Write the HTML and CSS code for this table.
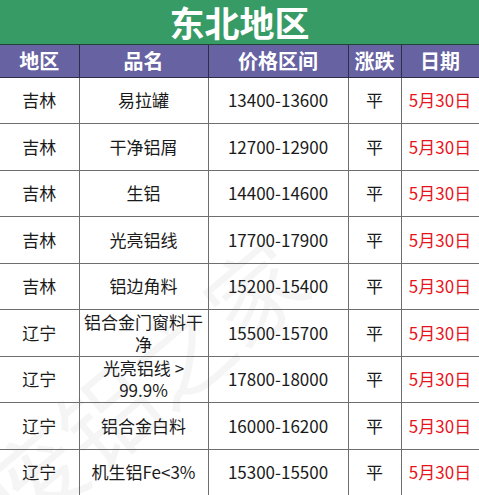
FILE: index.html
```html
<!DOCTYPE html>
<html lang="zh">
<head>
<meta charset="utf-8">
<link rel="stylesheet" href="styles.css">
</head>
<body>
<div class="sheet">
  <div class="title">东北地区</div>
  <table class="grid">
    <colgroup>
      <col class="c1"><col class="c2"><col class="c3"><col class="c4"><col class="c5">
    </colgroup>
    <thead>
      <tr><th>地区</th><th>品名</th><th>价格区间</th><th>涨跌</th><th>日期</th></tr>
    </thead>
    <tbody>
      <tr><td>吉林</td><td>易拉罐</td><td>13400-13600</td><td>平</td><td class="date">5月30日</td></tr>
      <tr><td>吉林</td><td>干净铝屑</td><td>12700-12900</td><td>平</td><td class="date">5月30日</td></tr>
      <tr><td>吉林</td><td>生铝</td><td>14400-14600</td><td>平</td><td class="date">5月30日</td></tr>
      <tr><td>吉林</td><td>光亮铝线</td><td>17700-17900</td><td>平</td><td class="date">5月30日</td></tr>
      <tr><td>吉林</td><td>铝边角料</td><td>15200-15400</td><td>平</td><td class="date">5月30日</td></tr>
      <tr><td>辽宁</td><td class="wrap">铝合金门窗料干净</td><td>15500-15700</td><td>平</td><td class="date">5月30日</td></tr>
      <tr><td>辽宁</td><td class="wrap">光亮铝线 &gt;<br>99.9%</td><td>17800-18000</td><td>平</td><td class="date">5月30日</td></tr>
      <tr><td>辽宁</td><td>铝合金白料</td><td>16000-16200</td><td>平</td><td class="date">5月30日</td></tr>
      <tr><td>辽宁</td><td>机生铝Fe&lt;3%</td><td>15300-15500</td><td>平</td><td class="date">5月30日</td></tr>
    </tbody>
  </table>
  <div class="watermark">废铝之家</div>
</div>
</body>
</html>
```
FILE: styles.css
```css
* { box-sizing: border-box; }
html, body { margin: 0; padding: 0; background: #ffffff; }
body { font-family: "Noto Sans CJK SC", "Noto Sans", sans-serif; }
.sheet {
  position: relative;
  width: 479px;
  height: 495px;
  overflow: hidden;
}
.title {
  height: 45px;
  background: #379b66;
  color: #ffffff;
  font-weight: bold;
  font-size: 35px;
  line-height: 44px;
  text-align: center;
  border-bottom: 1px solid #23433a;
}
.grid {
  width: 479px;
  border-collapse: collapse;
  table-layout: fixed;
}
.c1 { width: 79px; }
.c2 { width: 129px; }
.c3 { width: 140px; }
.c4 { width: 53px; }
.c5 { width: 78px; }
.grid th {
  height: 32px;
  background: #6762a2;
  color: #ffffff;
  font-weight: bold;
  font-size: 20px;
  line-height: 24px;
  padding: 0;
  border: 1px solid #2e2c4a;
  border-top: none;
}
.grid td {
  height: 46.5px;
  padding: 0;
  text-align: center;
  font-size: 17px;
  line-height: 22px;
  color: #1a1a1a;
  border: 1px solid #6e6e6e;
}
.grid td.wrap { padding: 0 4px; }
.grid td.date { color: #e8141c; }
.grid th:first-child, .grid td:first-child { border-left: none; }
.watermark {
  position: absolute;
  left: 40px;
  top: 420px;
  font-size: 96px;
  font-family: "Noto Sans CJK SC", sans-serif;
  color: rgba(120, 120, 120, 0.07);
  transform: rotate(-40deg);
  transform-origin: left bottom;
  white-space: nowrap;
  pointer-events: none;
}
```
